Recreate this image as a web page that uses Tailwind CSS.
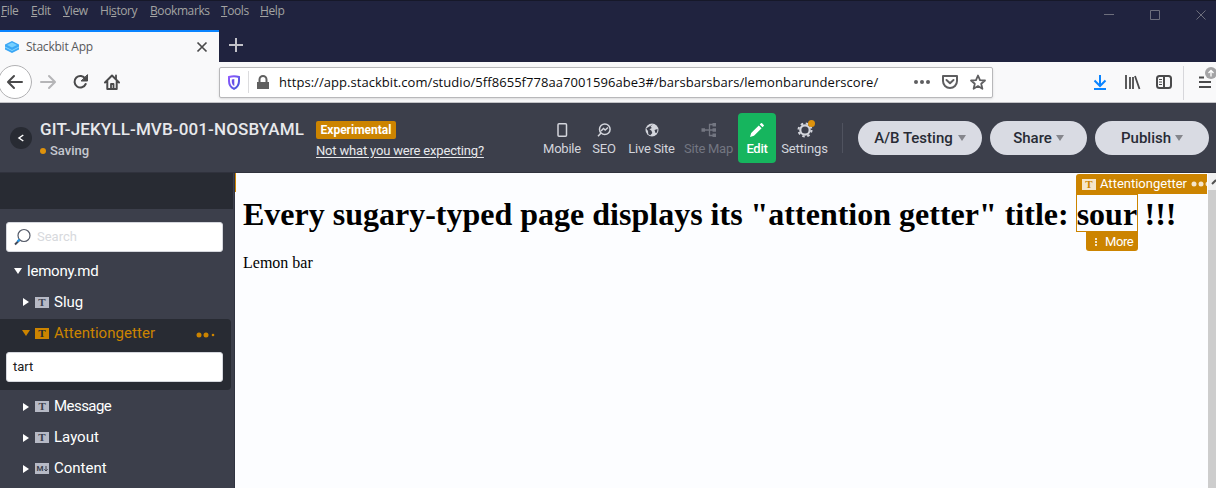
<!DOCTYPE html>
<html lang="en">
<head>
<meta charset="utf-8">
<title>Stackbit App</title>
<script src="https://cdn.jsdelivr.net/npm/@tailwindcss/browser@4"></script>
</head>
<body class="w-[1216px] h-[488px] overflow-hidden bg-[#3c3f4b] font-['Roboto',sans-serif] whitespace-nowrap">
<div class="flex flex-col h-[488px]">
  <!-- Browser menu and window buttons -->
  <header class="h-[30px] shrink-0 flex bg-[#20233f] border-t border-[#161829] font-['Open_Sans',sans-serif] text-[12px] leading-[20px] tracking-[-0.4px] text-[#a3a3a2]">
    <nav class="flex pl-px">
      <span class="w-[30px]"><u>F</u>ile</span><span class="w-[32px]"><u>E</u>dit</span><span class="w-[37px]"><u>V</u>iew</span><span class="w-[50px]">Hi<u>s</u>tory</span><span class="w-[71px]"><u>B</u>ookmarks</span><span class="w-[39px]"><u>T</u>ools</span><span><u>H</u>elp</span>
    </nav>
    <svg class="ml-auto w-[116px] h-[28px]" viewBox="1100 1 116 28" fill="none" stroke="#6d6e7c"><path d="M1104 14.5h10M1150.500 10.500h9v9h-9zM1196.500 10.500l9 9M1205.500 10.500l-9 9"/></svg>
  </header>
  <!-- Tabs -->
  <div class="h-[32px] shrink-0 flex bg-[#20233f]">
    <div class="w-[219px] h-full bg-[#f9f9fa] border-t-2 border-[#0a84ff] flex items-center pl-[4px] pr-[11px]">
      <svg class="w-4 h-4" viewBox="0 0 16 16"><path d="M1 5.500 8 2l7 3.500v5L8 14l-7-3.500z" fill="#3ba7f5"/><path d="M3 6 8 3.500 13 6 8 8.500z" fill="#76d0ff"/><path d="m1 8 7 3.500L15 8" fill="none" stroke="#83d6ff"/></svg>
      <span class="ml-[6px] font-['Open_Sans',sans-serif] text-[12px] tracking-[-0.22px] text-[#58585a]">Stackbit App</span>
      <svg class="ml-auto w-[12px] h-[12px]" viewBox="0 0 12 12" stroke="#4a4a4b" stroke-width="1.700"><path d="m1.500 1.500 9 9m0-9-9 9"/></svg>
    </div>
    <svg class="w-[34px] h-[30px]" viewBox="219 30 34 30" stroke="#c2c2c9" stroke-width="2"><path d="M229 45h14M236 38v14"/></svg>
  </div>
  <!-- Toolbar -->
  <div class="h-[41px] shrink-0 flex bg-[#f9f9fa] border-b border-[#c3c3c7]">
    <svg class="w-[219px] h-[40px] shrink-0" viewBox="0 62 219 40" fill="none" stroke="#4a4a4b" stroke-width="2" stroke-linecap="round" stroke-linejoin="round"><circle cx="15" cy="82" r="16.500" fill="#fff" stroke="#b2b2b4" stroke-width="1"/><path d="M22 82H8.500m5.500-6-6 6 6 6"/><path stroke="#b5b5b7" d="M41 82h13.500m-5.500-6 6 6-6 6"/><path d="M85.300 78.700a5.800 5.800 0 1 0 .4 5.300"/><path d="M87.500 75v6H81.500z" fill="#4a4a4b" stroke-width="1"/><path d="m105 82.500 7-7 7 7M107.300 81.500v7.500h9.400v-7.500"/><path d="M111 89v-5h2.500v5M116 75.500v3" stroke-width="1.800"/></svg>
    <div class="w-[774px] mr-px h-[31px] mt-[5px] bg-white border border-[#b8b8ba] rounded-xs shadow-sm flex items-center">
      <svg class="w-[59px] h-[29px] shrink-0" viewBox="220 68 59 29"><defs><linearGradient id="shield" x1="0" y1="0" x2="1" y2="1"><stop stop-color="#9059ff"/><stop offset="1" stop-color="#4256d8"/></linearGradient></defs><path d="M234 76.200c2 0 3.500.300 5 .8v4c0 4-1.800 6.300-5 7.800-3.200-1.500-5-3.800-5-7.800v-4c1.500-.5 3-.8 5-.8z" fill="none" stroke="url(#shield)" stroke-width="2"/><path d="M234.300 79v7c-1.800-1-2.500-2.500-2.500-4.500v-2z" fill="#6a50e8"/><path d="M248.500 71v22" stroke="#dcdcde"/><path d="M257 82h12v7h-12z" fill="#606060"/><path d="M259.500 83v-3.500a3.500 3.500 0 0 1 7 0V83" fill="none" stroke="#606060" stroke-width="2"/></svg>
      <span class="font-['Open_Sans',sans-serif] text-[13px] tracking-[0.05px] text-[#0c0c0d]">https://app.stackbit.com/studio/5ff8655f778aa7001596abe3#/barsbarsbars/lemonbarunderscore/</span>
      <svg class="ml-auto w-[82px] h-[29px] shrink-0" viewBox="910 68 82 29" fill="none" stroke="#5e5e60" stroke-width="2" stroke-linejoin="round"><g fill="#5e5e60" stroke="none"><circle cx="916" cy="82" r="2"/><circle cx="922" cy="82" r="2"/><circle cx="928" cy="82" r="2"/></g><path d="M943 76h14v5a7 7 0 0 1-14 0z"/><path d="m946.500 80 3.500 3.200 3.500-3.200" stroke-linecap="round"/><path d="m978 75.500 2 4.600 5 .4-3.800 3.300 1.200 5-4.400-2.700-4.400 2.700 1.200-5-3.800-3.300 5-.4z" stroke-width="1.800"/></svg>
    </div>
    <svg class="w-[222px] h-[40px] shrink-0" viewBox="994 62 222 40" fill="none" stroke="#4a4a4b" stroke-width="2"><path stroke="#0a84ff" d="M1100 75v11M1094.500 80.500l5.500 5.500 5.500-5.500M1094 89h12"/><path d="M1126 75v14M1130 77v12M1133 77v12M1135 76l4.500 13" stroke-width="1.800"/><rect x="1157" y="76" width="14" height="12" rx="2.500"/><path d="M1164 76v12"/><path d="M1159 79.500h3M1159 82h3M1159 84.500h3" stroke-width="1"/><path d="M1183.500 66v34" stroke="#d7d7db" stroke-width="1"/><path d="M1199 77.500h5M1199 82h12M1199 87h12" /><circle cx="1211" cy="73" r="6" fill="#a4a4a6" stroke="none"/><path d="M1211 76.500v-6M1208.500 73l2.500-2.500 2.500 2.500" stroke="#fff" stroke-width="1.300"/></svg>
  </div>
  <!-- Studio header -->
  <div class="h-[70px] shrink-0 flex bg-[#3c3f4b] border-b border-[#30323d]">
    <div class="w-[40px] pt-[24px] pl-[10px]"><div class="w-[22px] h-[22px] rounded-full bg-[#282b33] grid place-items-center"><svg class="w-2 h-2" viewBox="0 0 8 8" fill="none" stroke="#fff" stroke-width="1.500"><path d="M6.300 1 2 4l4.300 3"/></svg></div></div>
    <div class="w-[276px] pt-[16px]">
      <div class="text-[17px] leading-[20px] font-medium tracking-[0.12px] text-[#e8e9ec]">GIT-JEKYLL-MVB-001-NOSBYAML</div>
      <div class="flex items-center text-[13px] leading-[22px] pt-px font-medium text-[#c5c8d0]"><i class="w-[6px] h-[6px] rounded-full bg-[#de920c] mr-[4px] -mt-px"></i>Saving</div>
    </div>
    <div class="w-[228px] pt-[18px]">
      <div class="w-[80px] h-[18px] rounded-xs bg-[#cc8400] text-white text-[12px] leading-[18px] font-bold text-center">Experimental</div>
      <div class="text-[13px] leading-[24px] text-[#e8e9ec] underline underline-offset-2 tracking-[-0.18px]">Not what you were expecting?</div>
    </div>
    <nav class="flex pt-[10px] text-[13px] leading-[16px] tracking-[-0.25px] text-[#d3d5dc]">
      <div class="w-[36px] h-[50px] flex flex-col items-center pt-[9px]"><svg class="w-4 h-4 mb-[3px]" viewBox="0 0 16 16" fill="none" stroke="currentColor" stroke-width="1.500"><rect x="4" y="1.700" width="8.500" height="12.600" rx="1"/></svg>Mobile</div>
      <div class="w-[48px] h-[50px] flex flex-col items-center pt-[9px]"><svg class="w-4 h-4 mb-[3px]" viewBox="0 0 16 16" fill="none" stroke="currentColor" stroke-width="1.500"><circle cx="8.800" cy="7.200" r="5.300"/><path d="m5 11-3 3.300M5 9l2.500-2.500 1.700 1.500L12 5.500"/></svg>SEO</div>
      <div class="w-[47px] h-[50px] flex flex-col items-center pt-[9px]"><svg class="w-4 h-4 mb-[3px]" viewBox="0 0 16 16"><circle cx="8" cy="8" r="6.500" fill="currentColor"/><path d="M9 2.300 6.500 4.500 7.800 6 5.500 7.300l2 1.500L8.300 11l-2 2.300-2-1L4 9 2.200 6.500M10.500 8l3-1-.5 3.500-1.500.5z" fill="#3c3f4b"/></svg>Live Site</div>
      <div class="w-[67px] h-[50px] flex flex-col items-center pt-[9px] text-[#737681]"><svg class="w-4 h-4 mb-[3px]" viewBox="0 0 16 16" fill="none" stroke="currentColor"><path d="M4 8h8M12 2.500H8.500v11H12" stroke-width="1.300"/><path d="M.5 6.300h3.500v3.400H.500zM11.500 1H15v3.400h-3.500zM11.500 6.300H15v3.400h-3.500zM11.500 11.600H15V15h-3.500z" fill="currentColor" stroke="none"/></svg>Site Map</div>
      <div class="w-[38px] h-[50px] -ml-[4px] rounded bg-[#16b55e] text-white font-medium flex flex-col items-center pt-[9px]"><svg class="w-4 h-4 mb-[3px]" viewBox="0 0 16 16" fill="currentColor"><path d="m1 15 1.200-4 7.600-7.600 2.800 2.800L5 13.800zM10.700 2.500l1.200-1.200q.6-.6 1.200 0l1.600 1.600q.6.600 0 1.200l-1.200 1.200z"/></svg>Edit</div>
      <div class="w-[57px] h-[50px] flex flex-col items-center pt-[9px] relative tracking-[-0.1px]"><svg class="w-4 h-4 mb-[3px]" viewBox="0 0 16 16" fill="none" stroke="currentColor"><circle cx="8" cy="8" r="4.700" stroke-width="2.200"/><circle cx="8" cy="8" r="6.500" stroke-width="2" stroke-dasharray="2.500 2.605"/></svg>Settings<i class="absolute left-[32px] top-[7px] w-[7px] h-[7px] rounded-full bg-[#de920c]"></i></div>
    </nav>
    <div class="w-px h-[30px] mt-[20px] ml-[9px] bg-[#50535f]"></div>
    <div class="flex gap-[8px] ml-[15px] pt-[18px] text-[15px] font-medium text-[#282b35]">
      <div class="w-[124px] h-[34px] rounded-full bg-[#d9dbe3] flex items-center justify-center gap-[5px]">A/B Testing<i class="border-x-4 border-x-transparent border-t-[6px] border-t-[#85868c]"></i></div>
      <div class="w-[97px] h-[34px] rounded-full bg-[#d9dbe3] flex items-center justify-center gap-[4px]">Share<i class="border-x-4 border-x-transparent border-t-[6px] border-t-[#85868c]"></i></div>
      <div class="w-[114px] h-[34px] rounded-full bg-[#d9dbe3] flex items-center justify-center gap-[4px]">Publish<i class="border-x-4 border-x-transparent border-t-[6px] border-t-[#85868c]"></i></div>
    </div>
  </div>
  <main class="flex h-[315px]">
    <!-- Field tree -->
    <aside class="w-[235px] shrink-0 bg-[#3c3f4b] border-r border-[#303340] text-[15px] text-white">
      <div class="h-[36px] bg-[#282b33] mr-px"></div>
      <div class="mt-[13px] ml-[6px] w-[217px] h-[30px] rounded-[3px] bg-white border border-[#d5d7dd] flex items-center pl-[7px] text-[13px] text-[#d7d9dd]"><svg class="w-[17px] h-[18px] mr-[6px]" viewBox="0 0 17 18" fill="none"><circle cx="10" cy="7.500" r="6" stroke="#545a68" stroke-width="1.200"/><path d="m5.500 12-4.500 4.500" stroke="#424957" stroke-width="2"/><path d="m5.500 11.500-2 2" stroke="#249cf0" stroke-width="2"/></svg>Search</div>
      <div class="h-[32px] mt-[3px] flex items-center pl-[14px] tracking-[-0.22px]"><i class="border-x-4 border-x-transparent border-t-[6px] border-t-white mr-[5px]"></i>lemony.md</div>
      <div class="h-[30px] mb-[2px] flex items-center pl-[23px]"><i class="border-y-4 border-y-transparent border-l-[6px] border-l-white mr-[6px]"></i><b class="w-[14px] h-[11px] mr-[5px] bg-[#b6b9c5] text-[#3c3f4b] font-['Liberation_Serif',serif] text-[11px] leading-[11px] text-center">T</b>Slug</div>
      <div class="h-[71px] mr-[3px] bg-[#282b33] rounded-r">
        <div class="h-[28px] flex items-center pl-[22px] pr-[16px] text-[#cc8400]"><i class="border-x-4 border-x-transparent border-t-[6px] border-t-[#cc8400] mr-[5px]"></i><b class="w-[14px] h-[11px] mr-[5px] bg-[#cc8400] text-[#282b33] font-['Liberation_Serif',serif] text-[11px] leading-[11px] text-center">T</b><span class="tracking-[0.05px]">Attentiongetter</span><svg class="ml-auto w-[20px] h-[6px] mt-1" viewBox="0 0 20 6" fill="#cc8400"><circle cx="4" cy="3" r="2.500"/><circle cx="11" cy="3" r="2.500"/><circle cx="18" cy="3" r="1.300"/></svg></div>
        <div class="mt-[5px] ml-[6px] w-[217px] h-[30px] rounded-[3px] bg-white border border-[#d5d7dd] flex items-center pl-[6px] text-[13px] text-[#202020]">tart</div>
      </div>
      <div class="h-[31px] mt-[1px] flex items-center pl-[23px] tracking-[-0.55px]"><i class="border-y-4 border-y-transparent border-l-[6px] border-l-white mr-[6px]"></i><b class="w-[14px] h-[11px] mr-[5px] bg-[#b6b9c5] text-[#3c3f4b] font-['Liberation_Serif',serif] text-[11px] leading-[11px] text-center">T</b>Message</div>
      <div class="h-[31px] flex items-center pl-[23px]"><i class="border-y-4 border-y-transparent border-l-[6px] border-l-white mr-[6px]"></i><b class="w-[14px] h-[11px] mr-[5px] bg-[#b6b9c5] text-[#3c3f4b] font-['Liberation_Serif',serif] text-[11px] leading-[11px] text-center">T</b>Layout</div>
      <div class="h-[31px] flex items-center pl-[23px]"><i class="border-y-4 border-y-transparent border-l-[6px] border-l-white mr-[6px]"></i><b class="w-[14px] h-[11px] mr-[5px] bg-[#b6b9c5] text-[#3c3f4b] text-[8px] leading-[11px] flex items-center justify-center">M<svg class="w-[4px] h-[6px]" viewBox="0 0 4 6" fill="none" stroke="#3c3f4b"><path d="M2 0v5M.3 3.300 2 5l1.700-1.700"/></svg></b>Content</div>
    </aside>
    <!-- Page preview -->
    <section class="relative flex-1 bg-[#fcfdff] text-black font-['Liberation_Serif',serif] pl-[8px]">
      <i class="absolute left-0 top-0 w-px h-[19px] bg-[#cc8400]"></i>
      <h1 class="pt-[23px] text-[32px] leading-[37px] font-bold">Every sugary-typed page displays its "attention getter" title: sour !!!</h1>
      <p class="mt-[21px] text-[16px] leading-[18px]">Lemon bar</p>
      <div class="absolute left-[841px] top-[21px] w-[62px] h-[38px] border border-[#cc8400]"></div>
      <div class="absolute left-[841px] top-[1px] w-[131px] h-[20px] overflow-hidden bg-[#cc8400] rounded-tl-[3px] flex items-center pl-[6px] text-white font-['Roboto',sans-serif] text-[13px]"><b class="w-[14px] h-[11px] shrink-0 mr-[4px] bg-[#f5e6cc] text-[#cc8400] font-['Liberation_Serif',serif] text-[11px] leading-[11px] text-center">T</b>Attentiongetter<svg class="ml-[4px] w-[19px] h-[6px] shrink-0" viewBox="0 0 19 6" fill="#f5e6cc"><circle cx="3" cy="3" r="2.500"/><circle cx="10" cy="3" r="2.500"/><circle cx="17" cy="3" r="2.500"/></svg></div>
      <div class="absolute left-[851px] top-[59px] w-[52px] h-[19px] bg-[#cc8400] rounded-b-[3px] flex items-center pl-[9px] text-white font-['Roboto',sans-serif] text-[13px] tracking-[-0.4px]"><svg class="w-[2px] h-[8px] mr-[8px]" viewBox="0 0 2 8" fill="#f5e6cc"><path d="M0 0h2v2H0zM0 3h2v2H0zM0 6h2v2H0z"/></svg>More</div>
      <div class="absolute right-0 top-0 w-[8px] h-full bg-[#cdcdcd]"><div class="h-[17px] bg-[#f0f0f0]"><svg class="w-[8px] h-[17px]" viewBox="0 0 8 17" fill="none" stroke="#505050" stroke-width="2"><path d="m4 11 4-4"/></svg></div></div>
    </section>
  </main>
</div>
</body>
</html>
